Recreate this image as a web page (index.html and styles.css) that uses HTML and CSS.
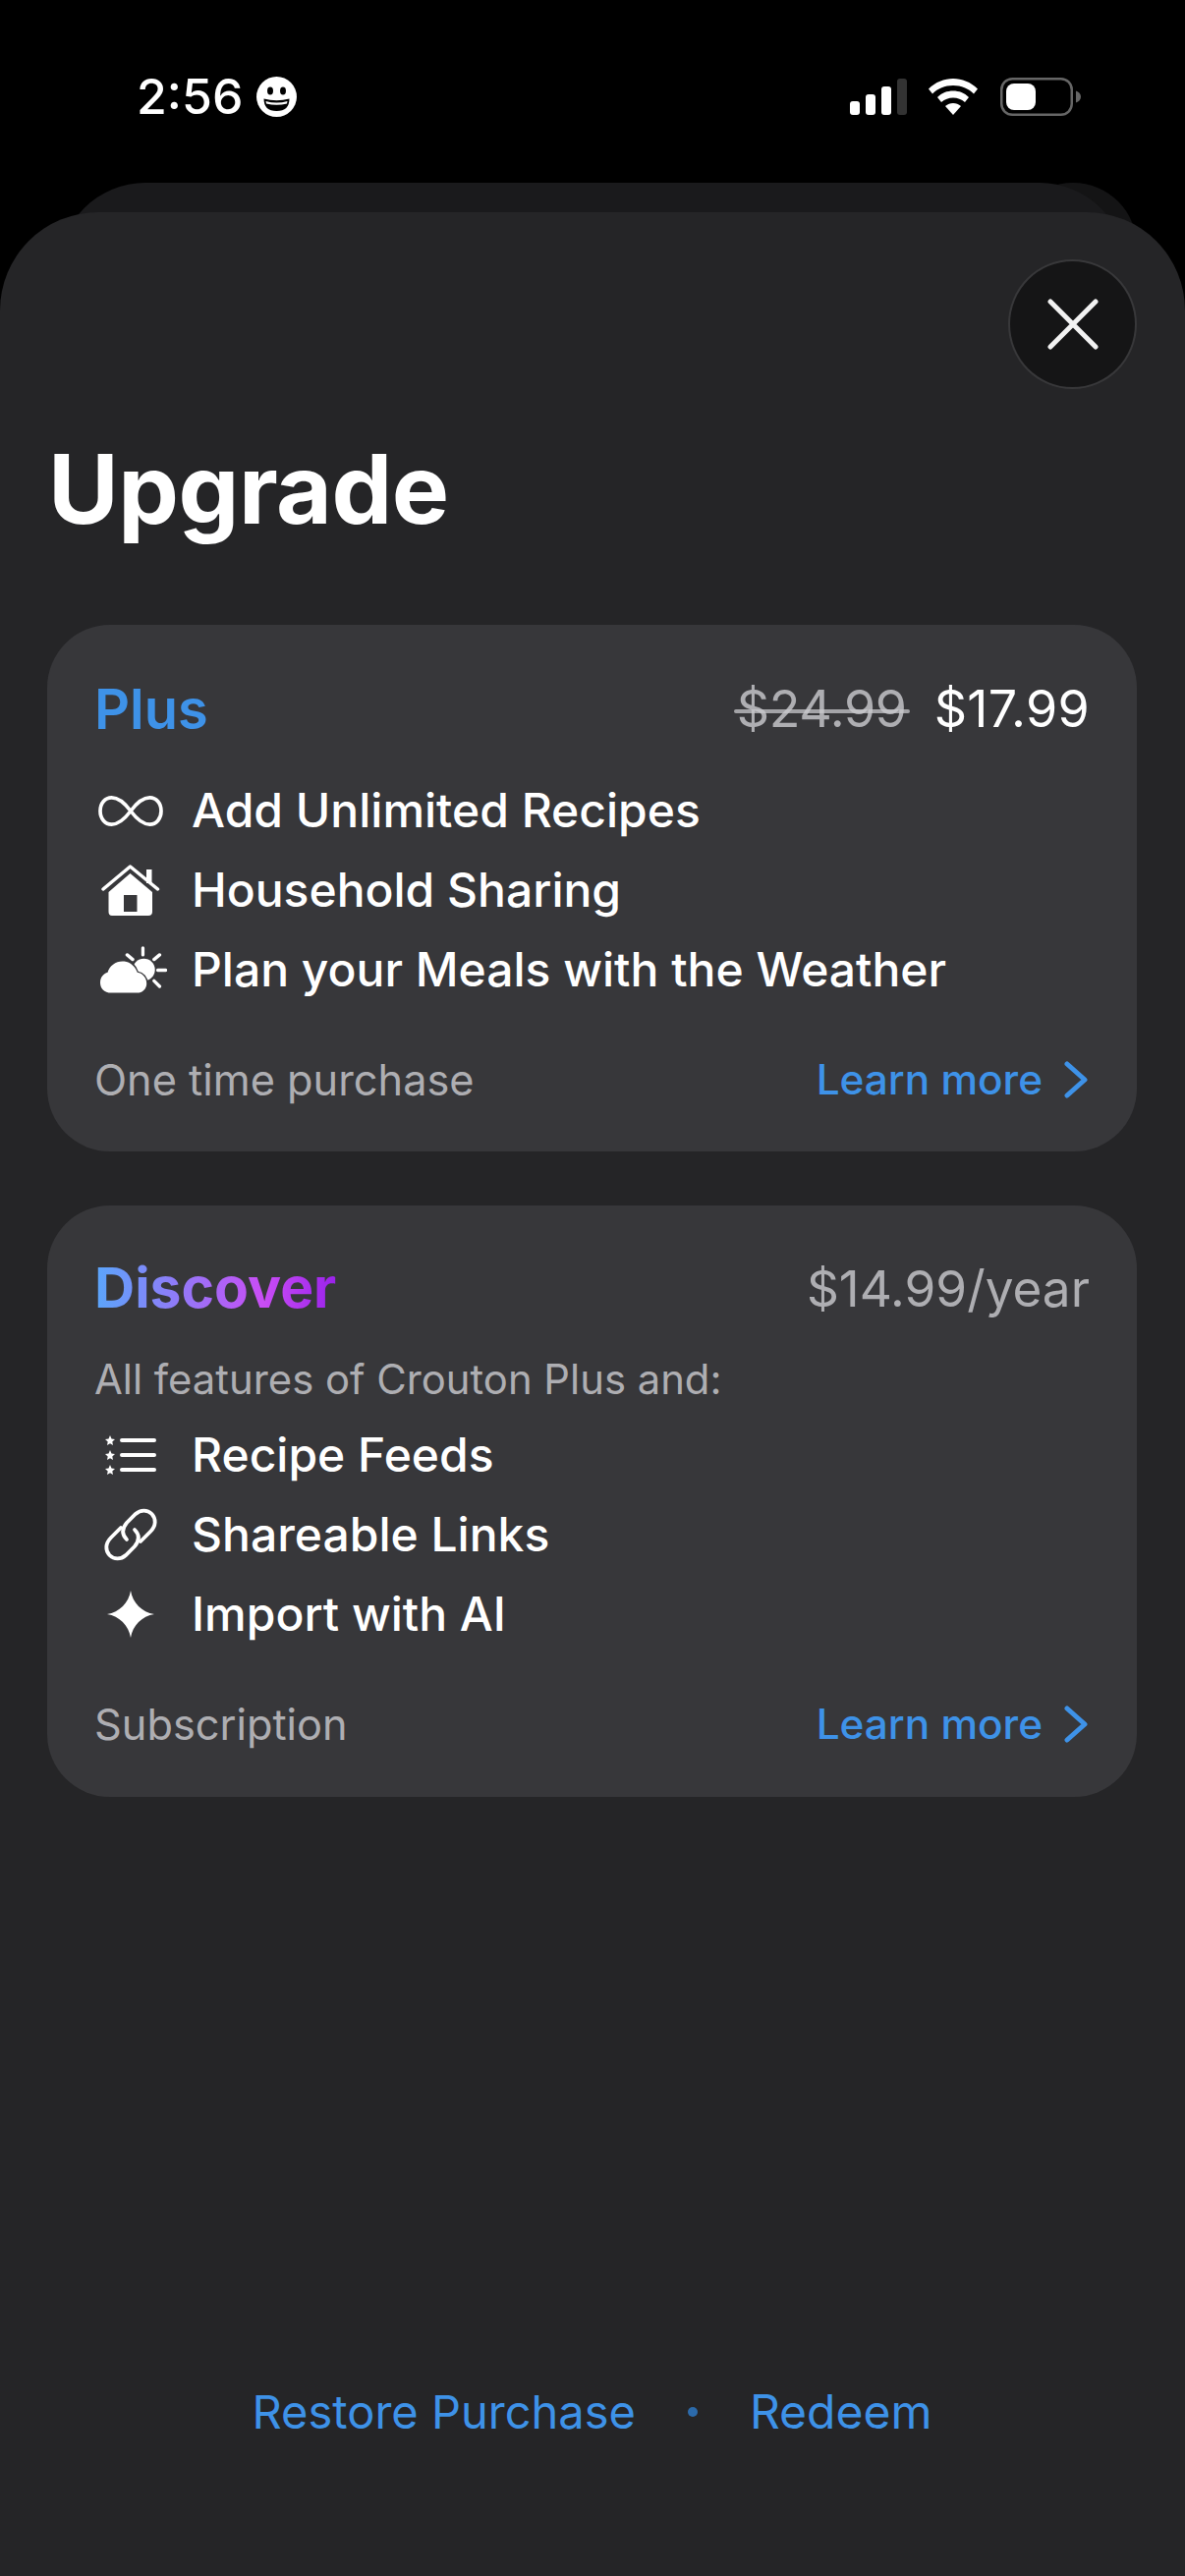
FILE: index.html
```html
<!DOCTYPE html>
<html lang="en">
<head>
<meta charset="utf-8">
<title>Upgrade</title>
<link rel="stylesheet" href="styles.css">
</head>
<body>
<div class="phone">
  <header class="status">
    <div class="status-left">
      <span class="time">2:56</span>
      <svg class="emoji" viewBox="0 0 41 41"><circle cx="20.500" cy="20.500" r="20.500" fill="#fff"/><ellipse cx="14" cy="14.500" rx="3" ry="4" fill="#000"/><ellipse cx="27" cy="14.500" rx="3" ry="4" fill="#000"/><path d="M7.500 22.500Q20.500 26 33.500 22.500Q33.500 35 20.500 35Q7.500 35 7.500 22.500Z" fill="#000"/><path d="M9.500 25Q20.500 28 31.500 25L31 27.500Q20.500 30 10 27.500Z" fill="#fff"/></svg>
    </div>
    <div class="status-right">
      <svg class="signal" viewBox="0 0 58 37"><rect x="0" y="23" width="10" height="14" rx="3" fill="#fff"/><rect x="16" y="16" width="10" height="21" rx="3" fill="#fff"/><rect x="32" y="8" width="10" height="29" rx="3" fill="#fff"/><rect x="48" y="0" width="10" height="37" rx="3" fill="#333"/></svg>
      <svg class="wifi" viewBox="0 0 50 37"><path d="M25 0C34 0 43 3.500 50 10.500L46 15.500C40.500 10 33.500 7 25 7S9.500 10 4 15.500L0 10.500C7 3.500 16 0 25 0Z" fill="#fff"/><path d="M25 12.500C31 12.500 36.500 14.500 41 19L37 24C33.500 21 29.500 19.500 25 19.500S16.500 21 13 24L9 19C13.500 14.500 19 12.500 25 12.500Z" fill="#fff"/><path d="M25 25C28 25 30.500 26 33 28L25 37L17 28C19.500 26 22 25 25 25Z" fill="#fff"/></svg>
      <svg class="battery" viewBox="0 0 82 39"><rect x="1.250" y="1.250" width="71.500" height="36.500" rx="11" fill="none" stroke="#666" stroke-width="2.500"/><rect x="6" y="6" width="30" height="27" rx="8" fill="#fff"/><path d="M77 13.500C80 14.500 82 16.500 82 19.500S80 24.500 77 25.500Z" fill="#666"/></svg>
    </div>
  </header>

  <div class="back-dot"></div>
  <div class="back-sheet"></div>

  <main class="sheet">
    <div class="sheet-top">
      <button class="close" type="button" aria-label="Close">
        <svg viewBox="0 0 52 52"><path d="M3 3L49 49M49 3L3 49" stroke="#f2f2f2" stroke-width="5" stroke-linecap="round" fill="none"/></svg>
      </button>
    </div>
    <h1 class="title">Upgrade</h1>

    <section class="card card-plus">
      <div class="card-head">
        <h2 class="plan plan-plus">Plus</h2>
        <div class="price">
          <span class="old-price">$24.99</span>
          <span class="new-price">$17.99</span>
        </div>
      </div>
      <ul class="features">
        <li class="feature">
          <span class="ficon"><svg viewBox="0 0 68 32" width="66" height="31"><path d="M34 16C28 8 22 2 14 2C7 2 2 8 2 16S7 30 14 30C22 30 28 24 34 16C40 8 46 2 54 2C61 2 66 8 66 16S61 30 54 30C46 30 40 24 34 16Z" fill="none" stroke="#fff" stroke-width="3.800"/></svg></span>
          <span>Add Unlimited Recipes</span>
        </li>
        <li class="feature">
          <span class="ficon"><svg viewBox="0 0 60 52" width="60" height="52"><rect x="46" y="5" width="5.500" height="14" fill="#fff"/><path d="M2 25L29.500 2L57.500 25" fill="none" stroke="#fff" stroke-width="3.500" stroke-linecap="round" stroke-linejoin="round"/><path d="M29.500 9L52 28V48Q52 52 48 52H11Q7.500 52 7.500 48V28ZM23 31V48H36.500V31Z" fill="#fff" fill-rule="evenodd"/></svg></span>
          <span>Household Sharing</span>
        </li>
        <li class="feature">
          <span class="ficon"><svg class="icon-cloud" viewBox="0 0 72 50" width="72" height="50"><circle cx="47" cy="25" r="12" fill="#fff"/><path d="M12 50C4 50 0 45 0 39C0 33 4 29 8 28C10 20 18 15 26 16C33 17 38 22 40 28C46 29 50 34 50 40C50 46 45 50 40 50Z" fill="#fff" stroke="#37373a" stroke-width="3" paint-order="stroke"/><path d="M46 1.500V9M29 9L35 14M64 9L58 14M62 25.500H70.500M58 37L64 43" stroke="#fff" stroke-width="3.500" stroke-linecap="round" fill="none"/></svg></span>
          <span>Plan your Meals with the Weather</span>
        </li>
      </ul>
      <div class="card-foot">
        <span class="foot-note">One time purchase</span>
        <a class="learn" href="#">Learn more
          <svg class="chev" viewBox="0 0 24 38" width="24" height="38"><path d="M3 3L21 19L3 35" fill="none" stroke="#3e92e8" stroke-width="5" stroke-linecap="round" stroke-linejoin="round"/></svg>
        </a>
      </div>
    </section>

    <section class="card card-discover">
      <div class="card-head">
        <h2 class="plan plan-discover">Discover</h2>
        <div class="price price-year">$14.99/year</div>
      </div>
      <p class="intro">All features of Crouton Plus and:</p>
      <ul class="features">
        <li class="feature">
          <span class="ficon"><svg viewBox="0 0 52 40" width="52" height="40"><path d="M5 0L6.500 3.500L10 4L7.300 6.500L8 10L5 8.200L2 10L2.700 6.500L0 4L3.500 3.500Z" fill="#fff"/><path d="M5 15L6.500 18.500L10 19L7.300 21.500L8 25L5 23.200L2 25L2.700 21.500L0 19L3.500 18.500Z" fill="#fff"/><path d="M5 30L6.500 33.500L10 34L7.300 36.500L8 40L5 38.200L2 40L2.700 36.500L0 34L3.500 33.500Z" fill="#fff"/><path d="M17 5H50M17 20H50M17 35H50" stroke="#fff" stroke-width="4" stroke-linecap="round"/></svg></span>
          <span>Recipe Feeds</span>
        </li>
        <li class="feature">
          <span class="ficon"><svg viewBox="0 0 54 54" width="54" height="54"><g fill="none" stroke="#fff" stroke-width="3.800" stroke-linecap="round"><path d="M17 20L7 30C1 36 1 43 5.500 48C10 52.500 17 52.500 22 48L31 39C36 33 36 27 31 22"/><path d="M37 34L47 24C53 18 53 11 48.500 6C44 1.500 37 1.500 32 6L23 15C18 21 18 27 23 32"/></g></svg></span>
          <span>Shareable Links</span>
        </li>
        <li class="feature">
          <span class="ficon"><svg viewBox="0 0 50 50" width="48" height="48"><path d="M25 0C27 13 37 23 50 25C37 27 27 37 25 50C23 37 13 27 0 25C13 23 23 13 25 0Z" fill="#fff"/></svg></span>
          <span>Import with AI</span>
        </li>
      </ul>
      <div class="card-foot">
        <span class="foot-note">Subscription</span>
        <a class="learn" href="#">Learn more
          <svg class="chev" viewBox="0 0 24 38" width="24" height="38"><path d="M3 3L21 19L3 35" fill="none" stroke="#3e92e8" stroke-width="5" stroke-linecap="round" stroke-linejoin="round"/></svg>
        </a>
      </div>
    </section>

    <footer class="links">
      <a class="link" href="#">Restore Purchase</a>
      <span class="dot"></span>
      <a class="link link-redeem" href="#">Redeem</a>
    </footer>
  </main>
</div>
</body>
</html>
```

FILE: styles.css
```css
* { box-sizing: border-box; }
html, body { margin: 0; padding: 0; background: #000; }
body { font-family: Inter, "Liberation Sans", sans-serif; color: #fff; }
a { text-decoration: none; color: inherit; }
ul { list-style: none; margin: 0; padding: 0; }
h1, h2, p { margin: 0; }

.phone { position: relative; width: 1206px; height: 2622px; overflow: hidden; background: #000; }

.status { height: 216px; padding: 73px 106px 0 139px; display: flex; justify-content: space-between; align-items: flex-start; }
.status-left { display: flex; align-items: center; gap: 14px; height: 50px; }
.time { font-size: 50px; line-height: 50px; font-weight: 500; }
.emoji { width: 41px; height: 41px; }
.status-right { display: flex; align-items: center; height: 50px; }
.signal { width: 58px; height: 37px; margin-right: 22px; }
.wifi { width: 50px; height: 37px; margin-right: 23px; }
.battery { width: 82px; height: 39px; }

.back-dot { position: absolute; left: 1027px; top: 186px; width: 130px; height: 130px; border-radius: 50%; background: #141415; }
.back-sheet { position: absolute; left: 60px; top: 186px; width: 1086px; height: 120px; background: #1a1a1c; border-radius: 88px 88px 0 0; }

.sheet { position: relative; height: 2406px; background: #252527; border-radius: 100px 100px 0 0; padding: 0 49px 137px 48px; display: flex; flex-direction: column; }
.sheet-top { display: flex; justify-content: flex-end; padding-top: 48px; }
.close { width: 131px; height: 132px; padding: 0; border-radius: 50%; background: #151516; border: 2px solid #38383a; display: flex; align-items: center; justify-content: center; }
.close svg { width: 52px; height: 52px; }

.title { font-size: 98px; line-height: 120px; font-weight: 700; letter-spacing: -0.5px; margin: 42px 0 78px 1px; }

.card { background: #37373a; border-radius: 64px; padding: 52px 48px 46px; }
.card-plus { margin-bottom: 55px; padding-top: 54px; padding-bottom: 45px; }

.card-head { display: flex; justify-content: space-between; align-items: center; height: 64px; }
.plan { font-size: 56px; line-height: 64px; font-weight: 600; }
.plan-plus { color: #3e92e8; }
.plan-discover { font-size: 57px; font-weight: 700; background: linear-gradient(90deg, #5aa6fb 0%, #c94df5 70%, #9a22ea 100%); -webkit-background-clip: text; background-clip: text; color: transparent; }

.price { display: flex; gap: 28px; font-size: 52px; line-height: 64px; }
.old-price { position: relative; color: #aeaeb2; letter-spacing: -0.4px; }
.old-price::after { content: ""; position: absolute; left: -3px; right: -3px; top: 32px; height: 4px; border-radius: 2px; background: rgba(200, 200, 204, 0.75); }
.new-price { color: #fff; letter-spacing: 0.3px; }
.price-year { color: #aeaeb2; font-size: 51.300px; }

.features { margin-top: 39px; display: flex; flex-direction: column; gap: 17px; }
.feature { display: flex; align-items: center; height: 64px; font-size: 48px; line-height: 64px; font-weight: 500; }
.ficon { width: 99px; flex: none; padding-right: 25px; display: flex; justify-content: center; }
.icon-cloud { margin-left: 6px; }

.intro { margin-top: 33px; font-size: 41.800px; line-height: 56px; color: #aeaeb2; }
.card-discover .features { margin-top: 17px; }

.card-foot { display: flex; justify-content: space-between; align-items: center; height: 56px; margin-top: 52px; }
.foot-note { font-size: 43.300px; line-height: 56px; color: #aeaeb2; }
.learn { display: flex; align-items: center; gap: 22px; font-size: 42.300px; line-height: 56px; color: #3e92e8; font-weight: 500; }
.chev { margin-right: 2px; }

.links { margin-top: auto; display: flex; justify-content: center; align-items: center; gap: 53px; font-size: 47px; line-height: 60px; color: #3e92e8; }
.link-redeem { font-size: 48px; }
.dot { width: 10px; height: 10px; border-radius: 50%; background: #2c6aaa; }
```
